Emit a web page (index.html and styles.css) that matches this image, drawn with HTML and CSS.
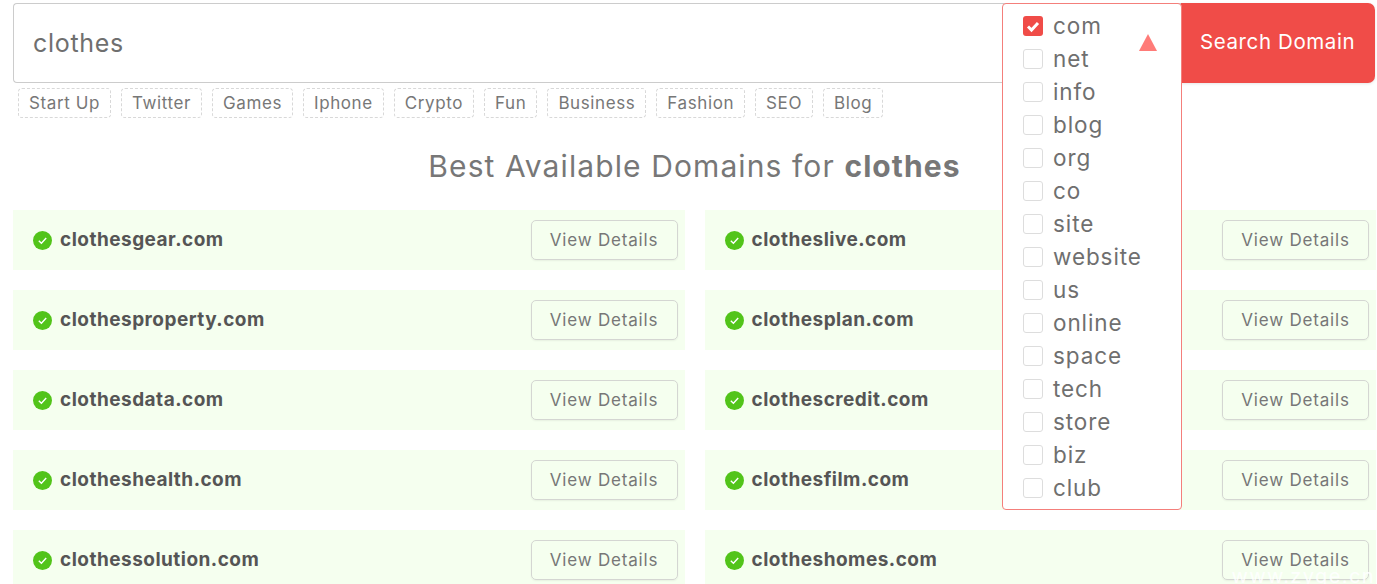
FILE: index.html
```html
<!DOCTYPE html>
<html lang="en">
<head>
<meta charset="utf-8">
<title>Domain Search</title>
<link rel="stylesheet" href="styles.css">
</head>
<body>
<main class="page">
  <form class="search">
    <div class="search-input">clothes</div>
    <div class="search-button">Search Domain</div>
    <div class="tld-menu">
      <svg class="tld-arrow" viewBox="0 0 18 17" width="18" height="17"><path d="M9 0 18 17H0Z"/></svg>
      <label class="tld"><span class="box checked"><svg viewBox="0 0 20 20" width="20" height="20"><path d="M5 10.5 8.5 14 15 7" fill="none" stroke="#fff" stroke-width="3"/></svg></span>com</label>
      <label class="tld"><span class="box"></span>net</label>
      <label class="tld"><span class="box"></span>info</label>
      <label class="tld"><span class="box"></span>blog</label>
      <label class="tld"><span class="box"></span>org</label>
      <label class="tld"><span class="box"></span>co</label>
      <label class="tld"><span class="box"></span>site</label>
      <label class="tld"><span class="box"></span>website</label>
      <label class="tld"><span class="box"></span>us</label>
      <label class="tld"><span class="box"></span>online</label>
      <label class="tld"><span class="box"></span>space</label>
      <label class="tld"><span class="box"></span>tech</label>
      <label class="tld"><span class="box"></span>store</label>
      <label class="tld"><span class="box"></span>biz</label>
      <label class="tld"><span class="box"></span>club</label>
    </div>
  </form>
  <div class="tags">
    <span class="tag">Start Up</span><span class="tag">Twitter</span><span class="tag">Games</span><span class="tag">Iphone</span><span class="tag">Crypto</span><span class="tag">Fun</span><span class="tag">Business</span><span class="tag">Fashion</span><span class="tag">SEO</span><span class="tag">Blog</span>
  </div>
  <h1 class="title">Best Available Domains for <b>clothes</b></h1>
  <section class="results">
    <div class="row"><span class="name"><svg class="ok" viewBox="0 0 19 19"><circle cx="9.5" cy="9.5" r="9.5"/><path d="M5.8 9.8 8.4 12.3 13.2 7"/></svg>clothesgear.com</span><a class="details">View Details</a></div>
    <div class="row"><span class="name"><svg class="ok" viewBox="0 0 19 19"><circle cx="9.5" cy="9.5" r="9.5"/><path d="M5.8 9.8 8.4 12.3 13.2 7"/></svg>clotheslive.com</span><a class="details">View Details</a></div>
    <div class="row"><span class="name"><svg class="ok" viewBox="0 0 19 19"><circle cx="9.5" cy="9.5" r="9.5"/><path d="M5.8 9.8 8.4 12.3 13.2 7"/></svg>clothesproperty.com</span><a class="details">View Details</a></div>
    <div class="row"><span class="name"><svg class="ok" viewBox="0 0 19 19"><circle cx="9.5" cy="9.5" r="9.5"/><path d="M5.8 9.8 8.4 12.3 13.2 7"/></svg>clothesplan.com</span><a class="details">View Details</a></div>
    <div class="row"><span class="name"><svg class="ok" viewBox="0 0 19 19"><circle cx="9.5" cy="9.5" r="9.5"/><path d="M5.8 9.8 8.4 12.3 13.2 7"/></svg>clothesdata.com</span><a class="details">View Details</a></div>
    <div class="row"><span class="name"><svg class="ok" viewBox="0 0 19 19"><circle cx="9.5" cy="9.5" r="9.5"/><path d="M5.8 9.8 8.4 12.3 13.2 7"/></svg>clothescredit.com</span><a class="details">View Details</a></div>
    <div class="row"><span class="name"><svg class="ok" viewBox="0 0 19 19"><circle cx="9.5" cy="9.5" r="9.5"/><path d="M5.8 9.8 8.4 12.3 13.2 7"/></svg>clotheshealth.com</span><a class="details">View Details</a></div>
    <div class="row"><span class="name"><svg class="ok" viewBox="0 0 19 19"><circle cx="9.5" cy="9.5" r="9.5"/><path d="M5.8 9.8 8.4 12.3 13.2 7"/></svg>clothesfilm.com</span><a class="details">View Details</a></div>
    <div class="row"><span class="name"><svg class="ok" viewBox="0 0 19 19"><circle cx="9.5" cy="9.5" r="9.5"/><path d="M5.8 9.8 8.4 12.3 13.2 7"/></svg>clothessolution.com</span><a class="details">View Details</a></div>
    <div class="row"><span class="name"><svg class="ok" viewBox="0 0 19 19"><circle cx="9.5" cy="9.5" r="9.5"/><path d="M5.8 9.8 8.4 12.3 13.2 7"/></svg>clotheshomes.com</span><a class="details">View Details</a></div>
  </section>
</main>
<div class="watermark">www.zyge.cn</div>
</body>
</html>
```
FILE: styles.css
```css
* { box-sizing: border-box; }
html, body { height: 100%; overflow: hidden; }
body {
  margin: 0;
  background: #fff;
  color: #777;
  font-family: Inter, "Noto Sans", sans-serif;
}
.page { padding: 3px 1px 0 13px; }
.search { position: relative; display: flex; height: 80px; margin-right: 1px; }
.search-input {
  flex: 1;
  display: flex;
  align-items: center;
  padding: 0 19px;
  border: 1px solid #ccc;
  border-right: 0;
  border-radius: 4px 0 0 4px;
  font-size: 25px;
  letter-spacing: .7px;
  color: #6f6f6f;
}
.search-button {
  width: 194px;
  padding: 0 0 3px 19px;
  display: flex;
  align-items: center;
  background: #f04c48;
  border-radius: 0 7px 7px 0;
  color: #fff;
  font-size: 20.5px;
  letter-spacing: .6px;
  box-shadow: 0 1px 3px rgba(0, 0, 0, .1);
}
.tld-menu {
  position: absolute;
  z-index: 2;
  top: 0;
  left: 989px;
  width: 180px;
  height: 507px;
  padding: 5px 0 0 20px;
  background: #fff;
  border: 1px solid #f47f7b;
  border-radius: 4px;
}
.tld-arrow { position: absolute; top: 30px; right: 24px; fill: #ff7b78; }
.tld {
  display: flex;
  align-items: center;
  gap: 10px;
  height: 33px;
  font-size: 22.5px;
  letter-spacing: .9px;
  color: #6f6f6f;
}
.box {
  flex: none;
  width: 20px;
  height: 20px;
  background: #fff;
  border: 1px solid #ddd;
  border-radius: 3px;
}
.box.checked { background: #f04c48; border: 0; }
.box svg { display: block; }
.tags { display: flex; gap: 10px; padding: 5px 0 0 5px; }
.tag {
  height: 30px;
  padding: 0 10px;
  display: flex;
  align-items: center;
  border: 1px dashed #d8d8d8;
  border-radius: 4px;
  font-size: 17px;
  letter-spacing: .6px;
  color: #777;
}
.title {
  margin: 30px 0 0;
  height: 62px;
  text-align: center;
  font-size: 30px;
  font-weight: 400;
  letter-spacing: 1.1px;
  line-height: 36px;
  color: #777;
}
.results { display: grid; grid-template-columns: 1fr 1fr; gap: 20px; }
.row {
  display: flex;
  align-items: center;
  justify-content: space-between;
  height: 60px;
  padding: 0 7px 0 20px;
  background: #f5ffef;
}
.name {
  display: flex;
  align-items: center;
  gap: 8px;
  font-size: 19px;
  font-weight: 700;
  letter-spacing: .48px;
  line-height: 22px;
  padding-bottom: 1px;
  color: #555;
}
.ok { width: 19px; height: 19px; flex: none; margin-top: 1px; }
.ok circle { fill: #52c41a; }
.ok path { fill: none; stroke: #fff; stroke-width: 1.4; }
.details {
  width: 147px;
  height: 40px;
  display: flex;
  align-items: center;
  justify-content: center;
  border: 1px solid #d4d6d2;
  border-radius: 5px;
  box-shadow: 0 1px 2px rgba(0, 0, 0, .06);
  font-size: 17px;
  letter-spacing: .8px;
  color: #777;
}
.watermark {
  position: absolute;
  z-index: 3;
  right: 2px;
  bottom: 0;
  font-size: 20px;
  line-height: 16px;
  letter-spacing: 1.4px;
  color: rgba(255, 255, 255, .9);
}
```
